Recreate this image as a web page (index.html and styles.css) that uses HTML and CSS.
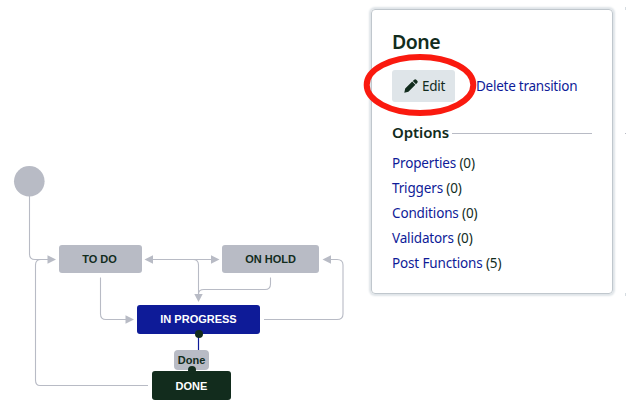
FILE: index.html
```html
<!DOCTYPE html>
<html lang="en">
<head>
<meta charset="utf-8">
<title>Workflow</title>
<link rel="stylesheet" href="styles.css">
</head>
<body>
<main class="page">
  <section class="canvas">
    <svg class="edges" width="360" height="414" viewBox="0 0 360 414">
      <circle class="start" cx="29.3" cy="181.3" r="15.3"/>
      <g class="lines">
        <path d="M29.5 196V254Q29.5 259.5 35 259.5H48"/>
        <path d="M148 385.5H40Q35.500 385.500 35.500 380V265Q35.500 259.500 41 259.500H48"/>
        <path d="M153 259.500H212"/>
        <path d="M193 259.500Q198.500 259.500 198.500 265V295"/>
        <path d="M100.500 277.500V314Q100.500 319.500 106 319.500H126"/>
        <path d="M270.500 277.500V284Q270.500 289.500 265 289.500H204Q198.500 289.500 198.500 294"/>
        <path d="M264 319.500H337Q343 319.500 343 314V265Q343 259.500 337 259.500H330"/>
      </g>
      <g class="arrows">
        <path d="M47.500 255.300L56 259.500L47.500 263.700Z"/>
        <path d="M153 255.300L144.500 259.500L153 263.700Z"/>
        <path d="M211 255.300L219.500 259.500L211 263.700Z"/>
        <path d="M331 255.300L322.500 259.500L331 263.700Z"/>
        <path d="M125.500 315.300L134 319.500L125.500 323.700Z"/>
        <path d="M194.300 294L198.500 302L202.700 294Z"/>
      </g>
      <path class="active-line" d="M198.500 334V352"/>
    </svg>
    <div class="node todo">TO DO</div>
    <div class="node hold">ON HOLD</div>
    <div class="node progress">IN PROGRESS</div>
    <div class="node done">DONE</div>
    <div class="label">Done</div>
    <span class="port port-out"></span>
    <span class="port port-in"></span>
  </section>
  <aside class="panel">
    <h2 class="title">Done</h2>
    <div class="actions">
      <button class="edit" type="button">
        <svg class="pencil" width="14" height="14" viewBox="0 0 14 14"><path d="M.3 13.700L1.200 9.600L8.200 2.600L11.400 5.800L4.400 12.800ZM8.800 2L10.200.700Q11.300-.2 12.300.800L13.200 1.700Q14.200 2.800 13.300 3.800L12 5.200Z"/></svg>
        <span>Edit</span>
      </button>
      <a class="link">Delete transition</a>
      <svg class="ring" width="114" height="66" viewBox="0 0 114 66"><ellipse cx="57" cy="33" rx="53.300" ry="28"/></svg>
    </div>
    <h3 class="options"><span>Options</span></h3>
    <ul class="list">
      <li><a class="link">Properties</a> (0)</li>
      <li><a class="link">Triggers</a> (0)</li>
      <li><a class="link">Conditions</a> (0)</li>
      <li><a class="link">Validators</a> (0)</li>
      <li><a class="link">Post Functions</a> (5)</li>
    </ul>
  </aside>
  <div class="gutter"><i class="tick"></i><i class="tick tick-rule"></i><i class="tick"></i></div>
</main>
</body>
</html>
```

FILE: styles.css
```css
* { box-sizing: border-box; }
body { margin: 0; background: #fff; color: #122c1d; }
.page { display: flex; align-items: flex-start; width: 626px; height: 414px; overflow: hidden; }

.canvas { position: relative; flex: 0 0 371px; height: 414px; font-family: "Liberation Sans", Arial, sans-serif; }
.edges { display: block; }
.start, .arrows { fill: #b8bbc5; }
.lines { fill: none; stroke: #b8bbc5; stroke-width: 1.1; }
.active-line { fill: none; stroke: #0e1b98; stroke-width: 1.2; }

.node { position: absolute; height: 28px; border-radius: 3px; font-size: 11px; font-weight: 700; line-height: 28px; text-align: center; white-space: nowrap; }
.todo { left: 59px; top: 245px; width: 83px; padding-right: 2px; background: #b8bbc5; }
.hold { left: 222px; top: 245px; width: 97px; background: #b8bbc5; }
.progress { left: 137px; top: 305px; width: 123px; height: 29px; background: #0e1b98; color: #fff; }
.done { left: 152px; top: 371px; width: 79px; height: 29px; background: #122c1d; color: #fff; line-height: 30px; }
.label { position: absolute; left: 174px; top: 350px; width: 35px; height: 20px; border-radius: 4px; background: #b8bbc5; font-size: 11px; font-weight: 700; line-height: 20px; text-align: center; }
.port { position: absolute; width: 8px; height: 8px; border-radius: 50%; background: #122c1d; }
.port-out { left: 194.500px; top: 330px; }
.port-in { left: 187.500px; top: 366px; }

.panel { flex: 0 0 242px; height: 285px; margin-top: 9px; padding: 20px 20px 0; border: 1px solid #c0c7cd; border-radius: 4px; box-shadow: 0 0 2px 2px #dfe4e8; font-family: "Noto Sans", sans-serif; font-size: 13.500px; letter-spacing: -.25px; }
.title { margin: 0; font-size: 19.500px; font-weight: 600; line-height: 24px; letter-spacing: -.5px; }
.actions { position: relative; display: flex; align-items: center; gap: 21px; margin-top: 16px; height: 32px; white-space: nowrap; }
.edit { display: flex; align-items: center; gap: 4px; width: 63px; height: 32px; padding: 0 0 0 12px; border: 0; border-radius: 3px; background: #dfe5e9; color: #122c1d; font: inherit; letter-spacing: inherit; }
.pencil { fill: #122c1d; }
.link { color: #0e1b98; }
.ring { position: absolute; left: -29.500px; top: -18.500px; fill: none; stroke: #fa1a0f; stroke-width: 6; }
.options { display: flex; align-items: center; gap: 3px; margin: 20px 0 0; font-size: 15px; font-weight: 600; line-height: 20px; letter-spacing: -.1px; }
.options::after { content: ""; flex: 1; height: 1px; margin-top: 2px; background: #b8bbc5; }
.list { margin: 9px 0 0; padding: 0; list-style: none; line-height: 25px; letter-spacing: -.15px; }

.gutter { display: flex; flex: 1; flex-direction: column; align-items: flex-end; height: 289px; margin-top: 7px; }
.tick { width: 1px; height: 3px; background: #d5dce1; }
.tick-rule { height: 1px; margin: 123px 0 auto; background: #b8bbc5; }
```
